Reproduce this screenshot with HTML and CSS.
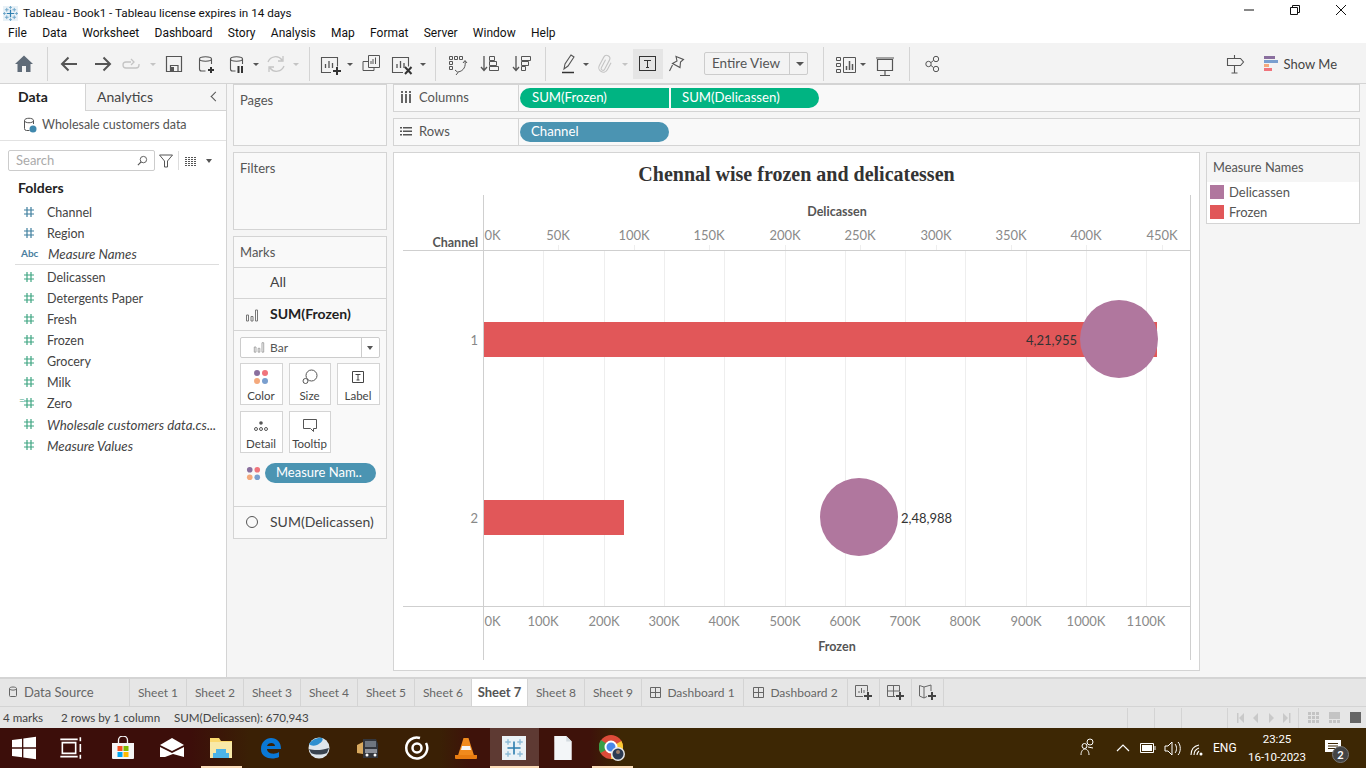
FILE: index.html
```html
<!DOCTYPE html>
<html lang="en">
<head>
    <meta charset="UTF-8">
    <meta name="viewport" content="width=device-width, initial-scale=1.0">
    <title>Tableau - Book1</title>
    <link rel="stylesheet" href="styles.css">
</head>
<body>
    <svg class="defs" width="0" height="0">
        <symbol id="hash" viewBox="0 0 12 12">
            <path d="M4 1v10M8 1v10M1 4h10M1 8h10" fill="none" stroke="currentColor" stroke-width="1.2"/>
        </symbol>
        <symbol id="dots" viewBox="0 0 16 16">
            <circle cx="4" cy="4" r="3" fill="#8a6f9e"/>
            <circle cx="12" cy="4" r="3" fill="#f0747c"/>
            <circle cx="4" cy="12" r="3" fill="#f4a97c"/>
            <circle cx="12" cy="12" r="3" fill="#7a9fcf"/>
        </symbol>
        <symbol id="barmark" viewBox="0 0 14 14">
            <path d="M1.5 7h2v6h-2zM6 8.500h2V13H6zM10.500 2h2v11h-2z" fill="none" stroke="currentColor"/>
        </symbol>
    </svg>

    <div class="titlebar">
        <svg class="app-icon" viewBox="0 0 16 16">
            <rect width="16" height="16" fill="#e8f1f7"/>
            <path d="M8 4v8M4 8h8" stroke="#2f7fb0" stroke-width="1.300"/>
            <path d="M4 2v4M2 4h4M12 2v4M10 4h4M4 10v4M2 12h4M12 10v4M10 12h4M8 0v3M6.500 1.500h3M8 13v3M6.500 14.500h3M0 8h3M1.500 6.500v3M13 8h3M14.500 6.500v3" stroke="#6da5c9" stroke-width="1"/>
        </svg>
        <span class="title-text">Tableau - Book1 - Tableau license expires in 14 days</span>
        <div class="win-controls">
            <svg viewBox="0 0 12 12"><path d="M1 6h10" stroke="#111"/></svg>
            <svg viewBox="0 0 12 12"><path d="M1.500 3.500h7v7h-7zM3.500 3.500v-2h7v7h-2" fill="none" stroke="#111"/></svg>
            <svg viewBox="0 0 12 12"><path d="M1 1l10 10M11 1L1 11" stroke="#111"/></svg>
        </div>
    </div>

    <div class="menubar">
        <span>File</span><span>Data</span><span>Worksheet</span><span>Dashboard</span><span>Story</span><span>Analysis</span><span>Map</span><span>Format</span><span>Server</span><span>Window</span><span>Help</span>
    </div>

    <div class="toolbar">
        <svg class="tools-a" viewBox="0 0 704 41" fill="none" stroke="#555">
            <path d="M47.500 4v34M309.500 4v34M435.500 4v34M545.500 4v34" stroke="#d4d4d4"/>
            <!-- home -->
            <path d="M24 12.500L33 21h-2.500v8h-4.500v-6h-4v6h-4.500v-8H15z" fill="#5f6b78" stroke="none"/>
            <!-- back, forward -->
            <path d="M77 21H62M68.500 14.500L62 21l6.500 6.500M95 21h15M103.500 14.500L110 21l-6.500 6.500" stroke="#555" stroke-width="2"/>
            <!-- redo -->
            <path d="M131 19h-5a3 3 0 0 0 0 6h10a3 3 0 0 0 3-3v-1M131 16l3 3-3 3" stroke="#c4c4c4" stroke-width="1.300"/>
            <path d="M150 20h6l-3 3z" fill="#c4c4c4" stroke="none"/>
            <!-- save -->
            <path d="M166.500 13.500h15v15h-15zM170.500 28.500v-6h7.500v6" stroke="#555" stroke-width="1.200"/>
            <rect x="171" y="24" width="3" height="4" fill="#555" stroke="none"/>
            <!-- new data source -->
            <path d="M199.500 16v10a2 2 0 0 0 2 2h4M211.500 16v5M199.500 16c0-3 12-3 12 0s-12 3-12 0z" stroke-width="1.100"/>
            <path d="M208 27h6M211 24v6" stroke="#333" stroke-width="2"/>
            <!-- pause data source -->
            <path d="M230.500 16v10a2 2 0 0 0 2 2h3M242.500 16v5M230.500 16c0-3 12-3 12 0s-12 3-12 0z" stroke-width="1.100"/>
            <path d="M238.500 23v7M242 23v7" stroke="#333" stroke-width="2"/>
            <path d="M253 20h6l-3 3z" fill="#555" stroke="none"/>
            <!-- refresh -->
            <path d="M268 19a8 8 0 0 1 14-2M284 23a8 8 0 0 1-14 2M283 13v5h-5M269 29v-5h5" stroke="#c4c4c4" stroke-width="1.300"/>
            <path d="M293 20h6l-3 3z" fill="#c4c4c4" stroke="none"/>
            <!-- new worksheet -->
            <path d="M331 29.500h-9.500v-15h16v9" stroke-width="1.100"/>
            <path d="M325.500 25v-4M329 25v-7M332.500 25v-5" stroke-width="1.300"/>
            <path d="M333 28h8M337 24v8" stroke="#333" stroke-width="2"/>
            <path d="M347 20h6l-3 3z" fill="#555" stroke="none"/>
            <!-- duplicate -->
            <path d="M368.500 12.500h11v12h-11zM373 16v5M375.500 14.500V21M371 18v3M368 18.500h-5v9h11v-3" stroke-width="1"/>
            <!-- clear -->
            <path d="M403 29.500h-10.500v-15h16v9" stroke-width="1.100"/>
            <path d="M397 25v-4M400.500 25v-7M404 25v-5" stroke-width="1.300"/>
            <path d="M405 24l6.500 7M411.500 24l-6.500 7" stroke="#333" stroke-width="2"/>
            <path d="M420 20h6l-3 3z" fill="#555" stroke="none"/>
            <!-- swap -->
            <path d="M449.500 13.500h3v3h-3zM454.500 13.500h3v3h-3zM459.500 13.500h3v3h-3zM449.500 18.500h3v3h-3zM449.500 23.500h3v3h-3zM465 18c1 5-1 10-7 11M455 27l3 2.500-2 2.500M463 20l2-2.500 2 2.500" stroke-width="1"/>
            <!-- sort -->
            <path d="M484 13v14M481 24l3 3.500 3-3.500" stroke-width="1.300"/>
            <path d="M489.500 13.500h5v4h-5zM489.500 18.500h7v4h-7zM489.500 23.500h9v4h-9z" stroke-width="1"/>
            <path d="M516 13v14M513 24l3 3.500 3-3.500" stroke-width="1.300"/>
            <path d="M521.500 13.500h9v4h-9zM521.500 18.500h7v4h-7zM521.500 23.500h4v4h-4z" stroke-width="1"/>
            <!-- highlight -->
            <path d="M564 26l1-5 6-9 3 2-6 9z" stroke-width="1.100"/>
            <path d="M562 29.500h12" stroke="#333" stroke-width="1.500"/>
            <path d="M583 20h6l-3 3z" fill="#555" stroke="none"/>
            <!-- paperclip -->
            <path transform="rotate(28 605 21)" d="M603.500 17v9a1.800 1.800 0 0 0 3.600 0V15.500a3.200 3.200 0 0 0-6.400 0V25a4.500 4.500 0 0 0 9 0v-8" stroke="#c4c4c4" stroke-width="1.100"/>
            <path d="M622 20h6l-3 3z" fill="#c4c4c4" stroke="none"/>
            <!-- text -->
            <rect x="633" y="6" width="30" height="30" fill="#e5e5e5" stroke="none"/>
            <rect x="639.500" y="13.500" width="16" height="14" stroke="#333"/>
            <path d="M644 17.500h7M647.500 17.500v7M646 24.500h3" stroke="#333"/>
            <!-- pin -->
            <path d="M676 13.500l7.500 3-3 2.500-.5 5.500-7.500-4 4.500-2.500zM672.500 22l-3 6" stroke-width="1.100"/>
        </svg>

        <div class="fit-select">
            <span class="fit-label">Entire View</span>
            <span class="fit-arrow"></span>
        </div>

        <svg class="tools-b" viewBox="808 0 140 41" fill="none" stroke="#555">
            <path d="M823.500 4v34M909.500 4v34" stroke="#d4d4d4"/>
            <!-- show cards -->
            <path d="M836.500 14.500h4v3h-4zM836.500 20.500h4v3h-4zM836.500 26.500h4v3h-4zM843.500 14.500h12v15h-12z" stroke-width="1"/>
            <path d="M846.500 27v-4M849.500 27v-9M852.500 27v-6" stroke-width="1.500"/>
            <path d="M860 20h6l-3 3z" fill="#555" stroke="none"/>
            <!-- presentation -->
            <path d="M877.500 16.500h15v11h-15zM876 15h18M885 27.500v5M880 32.500h10" stroke-width="1.200"/>
            <!-- share -->
            <circle cx="928.500" cy="21" r="2.700"/>
            <circle cx="936" cy="16" r="2.700"/>
            <circle cx="936" cy="26" r="2.700"/>
            <path d="M931 19.500l2.500-2M931 22.500l2.500 2"/>
        </svg>

        <div class="toolbar-right">
            <svg class="guide-icon" viewBox="0 0 20 20" fill="none" stroke="#555">
                <path d="M2.500 4.500h13l3 3.500-3 3.500h-13zM9.500 1v3.500M9.500 11.500V19M6.500 19h6" stroke-width="1.100"/>
            </svg>
            <div class="show-me">
                <svg class="show-me-icon" viewBox="0 0 14 16">
                    <rect width="11" height="3" fill="#8a6f9e"/>
                    <rect y="4" width="14" height="3" fill="#7a9fcf"/>
                    <rect y="8" width="5" height="3" fill="#f4a97c"/>
                    <rect y="12" width="8" height="3" fill="#f0747c"/>
                </svg>
                <span>Show Me</span>
            </div>
        </div>
    </div>

    <div class="workspace">
        <aside class="data-pane">
            <div class="pane-tabs">
                <div class="pane-tab active">Data</div>
                <div class="pane-tab">Analytics<span class="collapse"></span></div>
            </div>
            <div class="source-row">
                <svg class="source-icon" viewBox="0 0 14 16" fill="none" stroke="#555">
                    <path d="M1.500 3.500v8a2 2 0 0 0 2 2h3M10.500 3.500V7M1.500 3.500c0-3 9-3 9 0s-9 3-9 0z"/>
                    <circle cx="10" cy="12" r="3.500" fill="#3f88ad" stroke="none"/>
                </svg>
                <span>Wholesale customers data</span>
            </div>
            <div class="search-row">
                <div class="search-box">
                    <span>Search</span>
                    <svg viewBox="0 0 12 12" fill="none" stroke="#555"><circle cx="7" cy="5" r="3.500"/><path d="M4.500 7.500L1 11" stroke-width="1.300"/></svg>
                </div>
                <svg class="filter-icon" viewBox="0 0 14 14" fill="none" stroke="#555"><path d="M.5 1h13L8.500 7v6h-3V7z"/></svg>
                <span class="search-sep"></span>
                <svg class="list-icon" viewBox="0 0 12 10" fill="none" stroke="#555"><path d="M0 1.500h12M0 3.500h12M0 5.500h12M0 7.500h12M0 9.500h12" stroke-dasharray="2 1"/></svg>
                <span class="mini-arrow"></span>
            </div>
            <div class="folders">Folders</div>
            <ul class="fields">
                <li class="dim"><svg class="hash"><use href="#hash"/></svg>Channel</li>
                <li class="dim"><svg class="hash"><use href="#hash"/></svg>Region</li>
                <li class="dim calc divider"><span class="abc">Abc</span>Measure Names</li>
                <li class="mea"><svg class="hash"><use href="#hash"/></svg>Delicassen</li>
                <li class="mea"><svg class="hash"><use href="#hash"/></svg>Detergents Paper</li>
                <li class="mea"><svg class="hash"><use href="#hash"/></svg>Fresh</li>
                <li class="mea"><svg class="hash"><use href="#hash"/></svg>Frozen</li>
                <li class="mea"><svg class="hash"><use href="#hash"/></svg>Grocery</li>
                <li class="mea"><svg class="hash"><use href="#hash"/></svg>Milk</li>
                <li class="mea"><span class="eq">=</span><svg class="hash"><use href="#hash"/></svg>Zero</li>
                <li class="mea calc"><svg class="hash"><use href="#hash"/></svg>Wholesale customers data.cs...</li>
                <li class="mea calc"><svg class="hash"><use href="#hash"/></svg>Measure Values</li>
            </ul>
        </aside>

        <div class="cards-col">
            <section class="card pages-card">Pages</section>
            <section class="card filters-card">Filters</section>
            <section class="card marks-card">
                <div class="marks-head">Marks</div>
                <div class="marks-row">All</div>
                <div class="marks-row strong">
                    <svg class="mark-icon"><use href="#barmark"/></svg>SUM(Frozen)
                </div>
                <div class="marks-body">
                    <div class="mark-select">
                        <svg class="mark-icon small"><use href="#barmark"/></svg>
                        <span class="mark-select-label">Bar</span>
                        <span class="mark-select-arrow"></span>
                    </div>
                    <div class="mark-grid">
                        <div class="mark-cell">
                            <svg><use href="#dots"/></svg>Color
                        </div>
                        <div class="mark-cell">
                            <svg viewBox="0 0 16 16" fill="none" stroke="#555"><circle cx="9.500" cy="6.500" r="5.500"/><circle cx="3.500" cy="12" r="2.500" fill="#fff"/></svg>Size
                        </div>
                        <div class="mark-cell">
                            <svg viewBox="0 0 16 16" fill="none" stroke="#444"><path d="M2.500 2.500h11v11h-11zM5.500 5.500h5M8 5.500v5.500M6.500 11h3"/></svg>Label
                        </div>
                        <div class="mark-cell">
                            <svg viewBox="0 0 16 16" fill="none" stroke="#555"><circle cx="8" cy="6" r="1.800" fill="#555" stroke="none"/><circle cx="3" cy="12" r="1.500"/><circle cx="8" cy="12" r="1.500"/><circle cx="13" cy="12" r="1.500"/></svg>Detail
                        </div>
                        <div class="mark-cell">
                            <svg viewBox="0 0 16 16" fill="none" stroke="#555"><path d="M1.500 2.500h13v9h-3v3l-3-3h-7z"/></svg>Tooltip
                        </div>
                    </div>
                    <div class="mark-pill-row">
                        <svg class="pill-dots"><use href="#dots"/></svg>
                        <span class="pill blue">Measure Nam..</span>
                    </div>
                </div>
                <div class="marks-row last">
                    <span class="ring"></span>SUM(Delicassen)
                </div>
            </section>
        </div>

        <div class="view-col">
            <div class="shelf">
                <div class="shelf-label">
                    <svg viewBox="0 0 12 12"><path d="M1 0h2v2H1zM5 0h2v2H5zM9 0h2v2H9zM1 3h2v9H1zM5 3h2v9H5zM9 3h2v9H9z" fill="#666"/></svg>Columns
                </div>
                <span class="pill green">SUM(Frozen)</span>
                <span class="pill green">SUM(Delicassen)</span>
            </div>
            <div class="shelf">
                <div class="shelf-label">
                    <svg viewBox="0 0 12 12"><path d="M0 2h2v1.500H0zM3 2h9v1.500H3zM0 5.500h2V7H0zM3 5.500h9V7H3zM0 9h2v1.500H0zM3 9h9v1.500H3z" fill="#555"/></svg>Rows
                </div>
                <span class="pill blue">Channel</span>
            </div>
            <div class="view-body">
                <div class="chart-card">
                    <svg class="chart" viewBox="394 153 805 517">
                        <g class="grid-lines">
                            <path d="M543.500 250v356M604.500 250v356M664.500 250v356M724.500 250v356M785.500 250v356M845.500 250v356M905.500 250v356M965.500 250v356M1026.500 250v356M1086.500 250v356M1146.500 250v356"/>
                            <path d="M558.500 245v5M634.500 245v5M709.500 245v5M785.500 245v5M860.500 245v5M936.500 245v5M1011.500 245v5M1086.500 245v5M1162.500 245v5"/>
                        </g>
                        <text class="chart-title" x="796.500" y="181">Chennal wise frozen and delicatessen</text>
                        <text class="axis-title" x="837" y="216">Delicassen</text>
                        <text class="axis-title" x="837" y="651">Frozen</text>
                        <text class="head-label" x="478" y="247">Channel</text>
                        <text class="row-label" x="478" y="345">1</text>
                        <text class="row-label" x="478" y="523">2</text>
                        <g class="ticks">
                            <text x="484.500" y="240" class="start">0K</text>
                            <text x="558" y="240">50K</text>
                            <text x="634" y="240">100K</text>
                            <text x="709" y="240">150K</text>
                            <text x="785" y="240">200K</text>
                            <text x="860" y="240">250K</text>
                            <text x="936" y="240">300K</text>
                            <text x="1011" y="240">350K</text>
                            <text x="1086" y="240">400K</text>
                            <text x="1162" y="240">450K</text>
                            <text x="484.500" y="626" class="start">0K</text>
                            <text x="543" y="626">100K</text>
                            <text x="604" y="626">200K</text>
                            <text x="664" y="626">300K</text>
                            <text x="724" y="626">400K</text>
                            <text x="785" y="626">500K</text>
                            <text x="845" y="626">600K</text>
                            <text x="905" y="626">700K</text>
                            <text x="965" y="626">800K</text>
                            <text x="1026" y="626">900K</text>
                            <text x="1086" y="626">1000K</text>
                            <text x="1146" y="626">1100K</text>
                        </g>
                        <rect class="bar" x="484" y="322" width="673" height="35"/>
                        <rect class="bar" x="484" y="500" width="140" height="35"/>
                        <circle class="dot" cx="1119" cy="339" r="39"/>
                        <circle class="dot" cx="859" cy="517" r="39"/>
                        <text class="mark-label" x="1026" y="345">4,21,955</text>
                        <text class="mark-label" x="901" y="523">2,48,988</text>
                        <path class="axis-lines" d="M403 250.500h787M403 606.500h787M483.500 195v465M1190.500 195v465"/>
                    </svg>
                </div>
                <div class="legend">
                    <div class="legend-head">Measure Names</div>
                    <div class="legend-item"><span class="swatch purple"></span>Delicassen</div>
                    <div class="legend-item"><span class="swatch red"></span>Frozen</div>
                </div>
            </div>
        </div>
    </div>

    <div class="tabs">
        <div class="tab source-tab">
            <svg viewBox="0 0 10 12" fill="none" stroke="#666"><path d="M1.500 2.500v7a1 1 0 0 0 1 1h5a1 1 0 0 0 1-1v-7c0-2-7-2-7 0zM1.500 3c1 1.500 6 1.500 7 0"/></svg>Data Source
        </div>
        <div class="tab sheet">Sheet 1</div>
        <div class="tab sheet">Sheet 2</div>
        <div class="tab sheet">Sheet 3</div>
        <div class="tab sheet">Sheet 4</div>
        <div class="tab sheet">Sheet 5</div>
        <div class="tab sheet">Sheet 6</div>
        <div class="tab sheet active">Sheet 7</div>
        <div class="tab sheet">Sheet 8</div>
        <div class="tab sheet">Sheet 9</div>
        <div class="tab dash">
            <svg viewBox="0 0 11 11" fill="none" stroke="#666"><path d="M.5.500h10v10H.5zM5.500.500v10M.5 5.500h10"/></svg>Dashboard 1
        </div>
        <div class="tab dash wide">
            <svg viewBox="0 0 11 11" fill="none" stroke="#666"><path d="M.5.500h10v10H.5zM5.500.500v10M.5 5.500h10"/></svg>Dashboard 2
        </div>
        <div class="tab add">
            <svg viewBox="0 0 18 16" fill="none" stroke="#666"><path d="M8 12.500H.5v-11h12v6M4 9V7M6.500 9V4M9 9V6"/><path d="M9 12h8M13 8v8" stroke="#444" stroke-width="2"/></svg>
        </div>
        <div class="tab add">
            <svg viewBox="0 0 18 16" fill="none" stroke="#666"><path d="M8 12.500H.5v-11h12v6M6.500 1.500v11M.5 7h12"/><path d="M9 12h8M13 8v8" stroke="#444" stroke-width="2"/></svg>
        </div>
        <div class="tab add">
            <svg viewBox="0 0 18 16" fill="none" stroke="#666"><path d="M8 12.500l-3 1.500-4.500-2V1.500L5 3l7-2v6M5 3v11"/><path d="M9 12h8M13 8v8" stroke="#444" stroke-width="2"/></svg>
        </div>
    </div>

    <div class="statusbar">
        <span class="status-marks">4 marks</span>
        <span class="status-rows">2 rows by 1 column</span>
        <span class="status-sum">SUM(Delicassen): 670,943</span>
        <div class="status-cells">
            <span class="status-cell"></span>
            <span class="status-cell"></span>
            <span class="status-cell w46"></span>
            <span class="status-cell w71">
                <svg viewBox="0 0 54 10" fill="#c9c9c9"><path d="M0 0h1.500v10H0zM7 0v10L2 5zM21 0v10l-5-5zM32 0v10l5-5zM46 0v10l5-5zM52 0h1.500v10H52z"/></svg>
            </span>
            <span class="status-views">
                <svg viewBox="0 0 54 12"><path d="M0 0h3v3H0zM4 0h3v3H4zM8 0h3v3H8zM0 4h3v3H0zM4 4h3v3H4zM8 4h3v3H8zM0 8h3v3H0zM4 8h3v3H4zM8 8h3v3H8z" fill="#c4c4c4"/><path d="M21 0h11v7H21zM21 8h3v3h-3zM25 8h3v3h-3zM29 8h3v3h-3z" fill="#c4c4c4"/><rect x="42" width="11" height="11" fill="#666"/></svg>
            </span>
        </div>
    </div>

    <div class="taskbar">
        <div class="task-item start">
            <svg viewBox="0 0 18 18" fill="#fff"><path d="M0 3l7.500-1v6.500H0zM8.500 1.800L18 .5v8h-9.500zM0 9.500h7.500V16L0 15zM8.500 9.500H18v8l-9.500-1.300z"/></svg>
        </div>
        <div class="task-item">
            <svg viewBox="0 0 18 18" fill="none" stroke="#fff" stroke-width="1.200"><path d="M2.500 5h10v8h-10zM1 2.500h13M1 15.500h13M16 1v3M16 6v6M16 14v3"/></svg>
        </div>
        <div class="task-item store">
            <svg viewBox="0 0 24 24"><path d="M1 7h22v15a1 1 0 0 1-1 1H2a1 1 0 0 1-1-1z" fill="#f5f5f5"/><path d="M7.500 7V4a4.500 4 0 0 1 9 0v3" fill="none" stroke="#f5f5f5" stroke-width="1.300"/><rect x="6.500" y="10" width="5" height="5" fill="#f25022"/><rect x="12.500" y="10" width="5" height="5" fill="#7fba00"/><rect x="6.500" y="16" width="5" height="5" fill="#00a4ef"/><rect x="12.500" y="16" width="5" height="5" fill="#ffb900"/></svg>
        </div>
        <div class="task-item">
            <svg viewBox="0 0 24 20"><path d="M0 7L12 0l12 7-12 6z" fill="#fff"/><path d="M0 9l12 6 12-6v10l-11-3-8 3H0z" fill="#fff"/></svg>
        </div>
        <div class="task-item open">
            <svg viewBox="0 0 24 22"><path d="M1 1h9l2 3h11v17H1z" fill="#fbd96e"/><path d="M1 5h22v16H1z" fill="#f8e9a8"/><path d="M7 12h10v4h3v5H4v-5h3z" fill="#4cb4e8"/></svg>
        </div>
        <div class="task-item">
            <svg viewBox="0 0 24 24"><path d="M3 13C3 6 8 2 13 2c6 0 10 4 10 11H9c0 5 8 6 12 3v5c-6 3-18 2-18-8zm6-3h8c0-4-7-4-8 0z" fill="#0a78d7"/></svg>
        </div>
        <div class="task-item">
            <svg viewBox="0 0 24 24"><circle cx="12" cy="12" r="10.500" fill="#dfe6ec"/><path d="M2 8c3-5 10-7 13-6 2 2-1 5-5 7-3 1-6 1-8-1z" fill="#2d8fd0"/><path d="M2 13c6 2 14 1 20-1l-2 5c-5 2-12 2-16 0z" fill="#3a4450"/></svg>
        </div>
        <div class="task-item">
            <svg viewBox="0 0 24 24"><path d="M1 9l6-3v12l-6-1z" fill="#d9a95e"/><path d="M7 3h13l2 5v14H7z" fill="#33363d"/><rect x="9" y="5" width="11" height="6" fill="#6f7680"/><rect x="9" y="13" width="12" height="4" fill="#8c9099"/><circle cx="11" cy="19" r="1.500" fill="#fff"/><circle cx="19" cy="19" r="1.500" fill="#fff"/></svg>
        </div>
        <div class="task-item">
            <svg viewBox="0 0 24 24" fill="none" stroke="#fff"><path d="M21 7a10.500 10.500 0 1 1-6-5" stroke-width="2.500"/><circle cx="12" cy="12" r="4.500" stroke-width="2.500"/></svg>
        </div>
        <div class="task-item">
            <svg viewBox="0 0 24 24"><path d="M9.500 2h5l6 19H3.500z" fill="#f08a1d"/><path d="M8 10h8l1 4H7z" fill="#f5f5f5"/><path d="M1 19h22v3a1 1 0 0 1-1 1H2a1 1 0 0 1-1-1z" fill="#e87c10"/></svg>
        </div>
        <div class="task-item open active">
            <svg viewBox="0 0 22 22"><rect width="22" height="22" fill="#eaf2f7"/><path d="M11 5v12M5 11h12" stroke="#2f7fb0" stroke-width="1.500"/><path d="M5.500 3v5M3 5.500h5M16.500 3v5M14 5.500h5M5.500 14v5M3 16.500h5M16.500 14v5M14 16.500h5" stroke="#8cbcd8" stroke-width="1.300"/></svg>
        </div>
        <div class="task-item">
            <svg viewBox="0 0 16 22"><path d="M0 0h11l5 5v17H0z" fill="#f3f6f8"/><path d="M11 0l5 5h-5z" fill="#d4dbe0"/></svg>
        </div>
        <div class="task-item open">
            <svg class="chrome" viewBox="0 0 26 26">
                <circle cx="12" cy="12" r="12" fill="#dd4b39"/>
                <path d="M12 12L1.600 18A12 12 0 0 1 2 5z" fill="#3a9e47"/>
                <path d="M12 12l10.400-6A12 12 0 0 1 12 24z" fill="#fcc934"/>
                <circle cx="12" cy="12" r="5.500" fill="#4a88e8" stroke="#fff" stroke-width="2"/>
                <circle cx="19" cy="19" r="7" fill="#e8e8e8"/>
                <circle cx="19" cy="19" r="5.500" fill="#2b3a52"/>
                <circle cx="19" cy="17" r="2" fill="#9a7a66"/>
            </svg>
        </div>
        <div class="tray">
            <svg class="tray-icons" viewBox="1075 0 132 40" fill="none" stroke="#fff">
                <circle cx="1090" cy="14" r="3"/>
                <circle cx="1084.500" cy="18" r="2.500"/>
                <path d="M1081 27c0-4 2-6 4-6s4 2 4 6M1088 19l5 1"/>
                <path d="M1117 23l6-6 6 6" stroke-width="1.200"/>
                <path d="M1140.500 15.500h13v9h-13zM1155 18v4"/>
                <rect x="1142" y="17" width="10" height="6" fill="#fff" stroke="none"/>
                <path d="M1165 18h3l4-4v13l-4-4h-3zM1175 16c2 2 2 7 0 9M1178 14c3 3 3 10 0 13"/>
                <path d="M1191 27c0-5 3-9 8-10M1194 27c0-3 2-6 5-7M1197 27c0-1 1-3 2-4" stroke-width="1.100"/>
                <circle cx="1201" cy="26" r="1.500" fill="#fff" stroke="none"/>
            </svg>
            <span class="lang">ENG</span>
            <div class="clock"><span>23:25</span><span>16-10-2023</span></div>
            <div class="notify">
                <svg viewBox="0 0 16 14"><path d="M0 0h16v12H0z" fill="#fff"/><path d="M3 3.500h10M3 6h10M3 8.500h7" stroke="#3d2704"/></svg>
                <span class="badge">2</span>
            </div>
        </div>
    </div>
</body>
</html>
```

FILE: styles.css
```css
* {
    box-sizing: border-box;
}

html, body {
    margin: 0;
    height: 768px;
    overflow: hidden;
}

body {
    width: 1366px;
    font-family: "Lato", "Open Sans", sans-serif;
    font-size: 13px;
    color: #444;
    background-color: #f5f5f5;
    display: flex;
    flex-direction: column;
}

svg {
    display: block;
    flex: none;
}

.defs {
    position: absolute;
}

/* window chrome */
.titlebar {
    height: 26px;
    flex: none;
    background-color: #fff;
    display: flex;
    align-items: center;
    padding-left: 3px;
    font-family: "Roboto", sans-serif;
    font-size: 11.700px;
    color: #111;
}

.app-icon {
    width: 15px;
    height: 15px;
    margin-right: 5px;
}

.win-controls {
    margin-left: auto;
    display: flex;
    gap: 34px;
    padding-right: 19px;
    padding-bottom: 6px;
}

.win-controls svg {
    width: 12px;
    height: 12px;
}

.menubar {
    height: 17px;
    flex: none;
    background-color: #fff;
    display: flex;
    gap: 15.300px;
    padding-left: 8px;
    font-family: "Roboto", sans-serif;
    font-size: 12px;
    line-height: 15px;
    color: #111;
}

.toolbar {
    height: 41px;
    flex: none;
    background-color: #f3f3f3;
    border-bottom: 1px solid #d4d4d4;
    display: flex;
    align-items: flex-start;
}

.tools-a {
    width: 704px;
    height: 41px;
}

.tools-b {
    width: 140px;
    height: 41px;
}

.fit-select {
    width: 104px;
    height: 23px;
    margin-top: 9px;
    border: 1px solid #ccc;
    border-radius: 2px;
    display: flex;
    align-items: center;
    font-size: 13.500px;
    color: #555;
}

.fit-label {
    width: 85px;
    padding-left: 7px;
    border-right: 1px solid #ccc;
    line-height: 21px;
}

.fit-arrow {
    margin-left: 6px;
    border-top: 4px solid #555;
    border-left: 4px solid transparent;
    border-right: 4px solid transparent;
}

.toolbar-right {
    margin-left: auto;
    padding-right: 29px;
    height: 41px;
    display: flex;
    align-items: center;
}

.guide-icon {
    width: 20px;
    height: 20px;
    margin-right: 19px;
}

.show-me {
    display: flex;
    align-items: center;
    gap: 6px;
    font-size: 13px;
    color: #444;
}

.show-me-icon {
    width: 14px;
    height: 16px;
}

/* workspace */
.workspace {
    height: 593px;
    flex: none;
    display: flex;
    background-color: #f5f5f5;
}

.data-pane {
    width: 227px;
    background-color: #fff;
    border-right: 1px solid #d4d4d4;
}

.pane-tabs {
    display: flex;
    height: 27px;
}

.pane-tab {
    flex: 1;
    position: relative;
    padding-left: 11px;
    font-size: 14px;
    line-height: 26px;
    background-color: #f5f5f5;
    border-left: 1px solid #d4d4d4;
    border-bottom: 1px solid #d4d4d4;
}

.pane-tab.active {
    flex: none;
    width: 85px;
    padding-left: 18px;
    font-weight: 700;
    color: #222;
    background-color: #fff;
    border: none;
}

.collapse {
    position: absolute;
    right: 7px;
    top: 9px;
    width: 7px;
    height: 7px;
    border-left: 1px solid #555;
    border-bottom: 1px solid #555;
    transform: rotate(45deg);
}

.source-row {
    height: 30px;
    display: flex;
    align-items: center;
    gap: 5px;
    padding: 0 0 2px 23px;
    border-bottom: 1px solid #e2e2e2;
    font-size: 12.500px;
    color: #555;
}

.source-icon {
    width: 14px;
    height: 16px;
}

.search-row {
    display: flex;
    align-items: center;
    padding: 9px 0 0 8px;
}

.search-box {
    width: 147px;
    height: 21px;
    border: 1px solid #ccc;
    border-radius: 2px;
    display: flex;
    align-items: center;
    justify-content: space-between;
    padding: 0 6px 1px 7px;
    color: #aaa;
}

.search-box svg {
    width: 11px;
    height: 11px;
}

.filter-icon {
    width: 14px;
    height: 14px;
    margin-left: 4px;
}

.search-sep {
    width: 1px;
    height: 19px;
    background-color: #ddd;
    margin-left: 5px;
}

.list-icon {
    width: 12px;
    height: 10px;
    margin-left: 6px;
}

.mini-arrow {
    margin-left: 9px;
    border-top: 4px solid #555;
    border-left: 3.500px solid transparent;
    border-right: 3.500px solid transparent;
}

.folders {
    padding: 8px 0 0 18px;
    height: 31px;
    font-weight: 700;
    font-size: 14px;
    color: #222;
}

.fields {
    list-style: none;
    margin: 0;
    padding: 0;
}

.fields li {
    height: 21px;
    display: flex;
    align-items: center;
    padding-left: 47px;
    position: relative;
    font-size: 12.500px;
    color: #444;
}

.fields li.calc {
    font-style: italic;
    font-size: 13.300px;
}

.fields li.divider {
    margin-bottom: 2px;
    border-bottom: 1px solid #ddd;
    margin-right: 7px;
    margin-left: 15px;
    padding-left: 33px;
}

.hash {
    position: absolute;
    left: 23px;
    top: 4px;
    width: 12px;
    height: 12px;
}

.dim .hash {
    color: #3f7f9e;
}

.mea .hash {
    color: #3fa582;
}

.abc {
    position: absolute;
    left: 6px;
    top: 3px;
    font-size: 10px;
    font-style: normal;
    font-weight: 700;
    color: #4a7ea0;
}

.eq {
    position: absolute;
    left: 19px;
    top: 1px;
    font-size: 10px;
    font-style: normal;
    color: #3fa582;
}

.cards-col {
    width: 166px;
    padding: 0 6px;
    display: flex;
    flex-direction: column;
    gap: 6px;
}

.card {
    width: 154px;
    background-color: #f9f9f9;
    border: 1px solid #d4d4d4;
    color: #555;
}

.pages-card {
    height: 62px;
    padding: 7px 6px;
}

.filters-card {
    height: 78px;
    padding: 7px 6px;
}

.marks-card {
    height: 303px;
    background-color: #f9f9f9;
}

.marks-head {
    height: 31px;
    padding: 7px 6px;
    border-bottom: 1px solid #d4d4d4;
}

.marks-row {
    height: 31px;
    padding: 0 0 3px 36px;
    display: flex;
    align-items: center;
    position: relative;
    border-bottom: 1px solid #d4d4d4;
    font-size: 14px;
    color: #444;
}

.marks-row.strong {
    height: 32px;
    font-weight: 700;
    color: #222;
}

.marks-row.last {
    border-bottom: none;
    font-size: 14px;
    padding-bottom: 2px;
}

.mark-icon {
    position: absolute;
    left: 11px;
    top: 9px;
    width: 14px;
    height: 14px;
    color: #777;
}

.mark-icon.small {
    position: static;
    width: 12px;
    height: 12px;
    color: #999;
    margin: 0 5px 0 12px;
}

.ring {
    position: absolute;
    left: 12px;
    top: 9px;
    width: 12px;
    height: 12px;
    border: 1px solid #555;
    border-radius: 50%;
}

.marks-body {
    height: 176px;
    padding: 6px 6px 0;
    border-bottom: 1px solid #d4d4d4;
}

.mark-select {
    width: 140px;
    height: 21px;
    padding-bottom: 1px;
    border: 1px solid #ccc;
    border-radius: 2px;
    background-color: #fff;
    display: flex;
    align-items: center;
}

.mark-select-label {
    flex: 1;
    font-size: 12px;
    color: #555;
}

.mark-select-arrow {
    width: 18px;
    height: 19px;
    border-left: 1px solid #ccc;
    position: relative;
}

.mark-select-arrow::after {
    content: "";
    position: absolute;
    left: 5px;
    top: 8px;
    border-top: 4px solid #555;
    border-left: 3.500px solid transparent;
    border-right: 3.500px solid transparent;
}

.mark-grid {
    display: grid;
    grid-template-columns: 43px 42px 43px;
    grid-auto-rows: 42px;
    gap: 6px 6px;
    margin-top: 5px;
}

.mark-cell {
    background-color: #fff;
    border: 1px solid #d4d4d4;
    display: flex;
    flex-direction: column;
    align-items: center;
    padding: 5px 1px 0 0;
    font-size: 11.500px;
    line-height: 15px;
    color: #444;
}

.mark-cell svg {
    width: 16px;
    height: 16px;
    margin-bottom: 3px;
}

.mark-pill-row {
    display: flex;
    align-items: center;
    gap: 4px;
    margin-top: 10px;
}

.pill-dots {
    width: 15px;
    height: 15px;
    margin-left: 6px;
}

.pill {
    height: 20px;
    border-radius: 10px;
    color: #fff;
    font-size: 13px;
    line-height: 19px;
    padding-left: 11px;
}

.mark-pill-row .pill {
    width: 111px;
}

.pill.green {
    background-color: #00b482;
}

.pill.blue {
    background-color: #4b94b2;
}

.view-col {
    width: 967px;
    display: flex;
    flex-direction: column;
    gap: 6px;
}

.shelf {
    height: 28px;
    flex: none;
    background-color: #f9f9f9;
    border: 1px solid #d4d4d4;
    display: flex;
    align-items: center;
}

.shelf-label {
    width: 125px;
    height: 26px;
    margin-right: 1px;
    padding-bottom: 2px;
    border-right: 1px solid #d4d4d4;
    display: flex;
    align-items: center;
    gap: 7px;
    padding-left: 6px;
    color: #555;
}

.shelf-label svg {
    width: 12px;
    height: 12px;
}

.shelf .pill {
    width: 149px;
    margin-right: 2px;
    padding-left: 11px;
    font-size: 13.200px;
}

.shelf .pill.green:first-of-type {
    padding-left: 12px;
    border-radius: 10px 0 0 10px;
}

.shelf .pill.green:nth-of-type(2) {
    width: 148px;
    border-radius: 0 10px 10px 0;
}

.view-body {
    display: flex;
    gap: 6px;
    align-items: flex-start;
}

.chart-card {
    width: 807px;
    height: 519px;
    background-color: #fff;
    border: 1px solid #d4d4d4;
}

.chart {
    width: 805px;
    height: 517px;
}

.chart text {
    font-family: "Lato", "Open Sans", sans-serif;
    font-size: 13px;
    text-anchor: middle;
    fill: #444;
}

.chart .chart-title {
    font-family: "Liberation Serif", serif;
    font-size: 20px;
    font-weight: 700;
    fill: #333;
}

.chart .axis-title {
    font-weight: 700;
    font-size: 12.500px;
    fill: #555;
}

.chart .head-label {
    text-anchor: end;
    font-weight: 700;
    font-size: 12.500px;
    fill: #555;
}

.chart .row-label {
    text-anchor: end;
    fill: #888;
}

.chart .ticks text {
    fill: #8a8a8a;
}

.chart .ticks text.start {
    text-anchor: start;
}

.chart .mark-label {
    text-anchor: start;
    fill: #333;
}

.grid-lines path {
    fill: none;
    stroke: #eeeeee;
}

.axis-lines {
    fill: none;
    stroke: #cfcfcf;
}

.bar {
    fill: #e15759;
}

.dot {
    fill: #b0779e;
}

.legend {
    width: 154px;
    height: 72px;
    background-color: #fff;
    border: 1px solid #d4d4d4;
}

.legend-head {
    height: 29px;
    padding: 6px 6px;
    background-color: #f5f5f5;
    font-size: 12.800px;
    color: #555;
}

.legend-item {
    height: 20px;
    display: flex;
    align-items: center;
    gap: 5px;
    padding-left: 3px;
    color: #555;
}

.swatch {
    width: 14px;
    height: 14px;
}

.swatch.purple {
    background-color: #b0779e;
}

.swatch.red {
    background-color: #e15759;
}

/* sheet tabs */
.tabs {
    height: 30px;
    flex: none;
    background-color: #e6e6e6;
    border-top: 2px solid #d4d4d4;
    border-bottom: 1px solid #d4d4d4;
    display: flex;
}

.tab {
    height: 27px;
    padding-bottom: 1px;
    display: flex;
    align-items: center;
    justify-content: center;
    border-right: 1px solid #d4d4d4;
    font-size: 12px;
    color: #666;
}

.source-tab {
    width: 130px;
    justify-content: flex-start;
    padding-left: 8px;
    gap: 6px;
    font-size: 13px;
}

.source-tab svg {
    width: 10px;
    height: 12px;
}

.sheet {
    width: 57px;
}

.sheet.active {
    width: 56px;
    padding-bottom: 2px;
    background-color: #fff;
    font-size: 13px;
    font-weight: 700;
    color: #555;
}

.dash {
    width: 102px;
    gap: 6px;
}

.dash.wide {
    width: 104px;
}

.dash svg {
    width: 11px;
    height: 11px;
}

.add {
    width: 32px;
}

.add svg {
    width: 18px;
    height: 16px;
}

.statusbar {
    height: 21px;
    flex: none;
    background-color: #e6e6e6;
    display: flex;
    align-items: center;
    font-size: 11.600px;
    color: #444;
}

.status-marks {
    margin-left: 3px;
    width: 58px;
}

.status-rows {
    width: 113px;
}

.status-cells {
    margin-left: auto;
    height: 20px;
    display: flex;
}

.status-cell {
    width: 27px;
    border-left: 1px solid #d4d4d4;
}

.status-cell.w46 {
    width: 46px;
}

.status-cell.w71 {
    width: 71px;
    padding: 5px 0 0 9px;
}

.status-cell.w71 svg {
    width: 54px;
    height: 10px;
}

.status-views {
    width: 68px;
    border-left: 1px solid #d4d4d4;
    padding: 4px 0 0 9px;
}

.status-views svg {
    width: 54px;
    height: 12px;
}

/* windows taskbar */
.taskbar {
    height: 40px;
    flex: none;
    background: linear-gradient(90deg, #3c0e0a 0, #3c0e0a 190px, #3a2005 250px, #3a2005 440px, #3e120a 470px, #3e120a 590px, #3d2704 620px, #3d2704 100%);
    display: flex;
}

.task-item {
    width: 48.900px;
    height: 40px;
    display: flex;
    align-items: center;
    justify-content: center;
    position: relative;
}

.task-item svg {
    width: 24px;
    height: 24px;
}

.task-item.start {
    width: 47px;
}

.task-item.store {
    margin-left: 3px;
}

.task-item.active {
    background-color: #5e3a33;
}

.task-item.open::after {
    content: "";
    position: absolute;
    left: 4px;
    right: 4px;
    bottom: 0;
    height: 2px;
    background-color: #fbdcb8;
}

.task-item.active::after {
    left: 0;
    right: 0;
}

.task-item .chrome {
    width: 26px;
    height: 26px;
}

.tray {
    margin-left: auto;
    display: flex;
    align-items: center;
    color: #fff;
}

.tray-icons {
    width: 132px;
    height: 40px;
}

.lang {
    width: 26px;
    margin-left: 6px;
    font-family: "Roboto", sans-serif;
    font-size: 12px;
}

.clock {
    display: flex;
    flex-direction: column;
    align-items: center;
    width: 76px;
    margin-right: 5px;
    font-family: "Roboto", sans-serif;
    font-size: 11.500px;
    line-height: 18px;
}

.notify {
    position: relative;
    width: 30px;
    height: 40px;
    margin-right: 16px;
}

.notify svg {
    position: absolute;
    left: 5px;
    top: 12px;
    width: 16px;
    height: 14px;
}

.badge {
    position: absolute;
    left: 12px;
    top: 18px;
    width: 17px;
    height: 17px;
    border-radius: 50%;
    background-color: #444;
    border: 1px solid #777;
    text-align: center;
    line-height: 15px;
    font-size: 11px;
    font-weight: 700;
}
```
